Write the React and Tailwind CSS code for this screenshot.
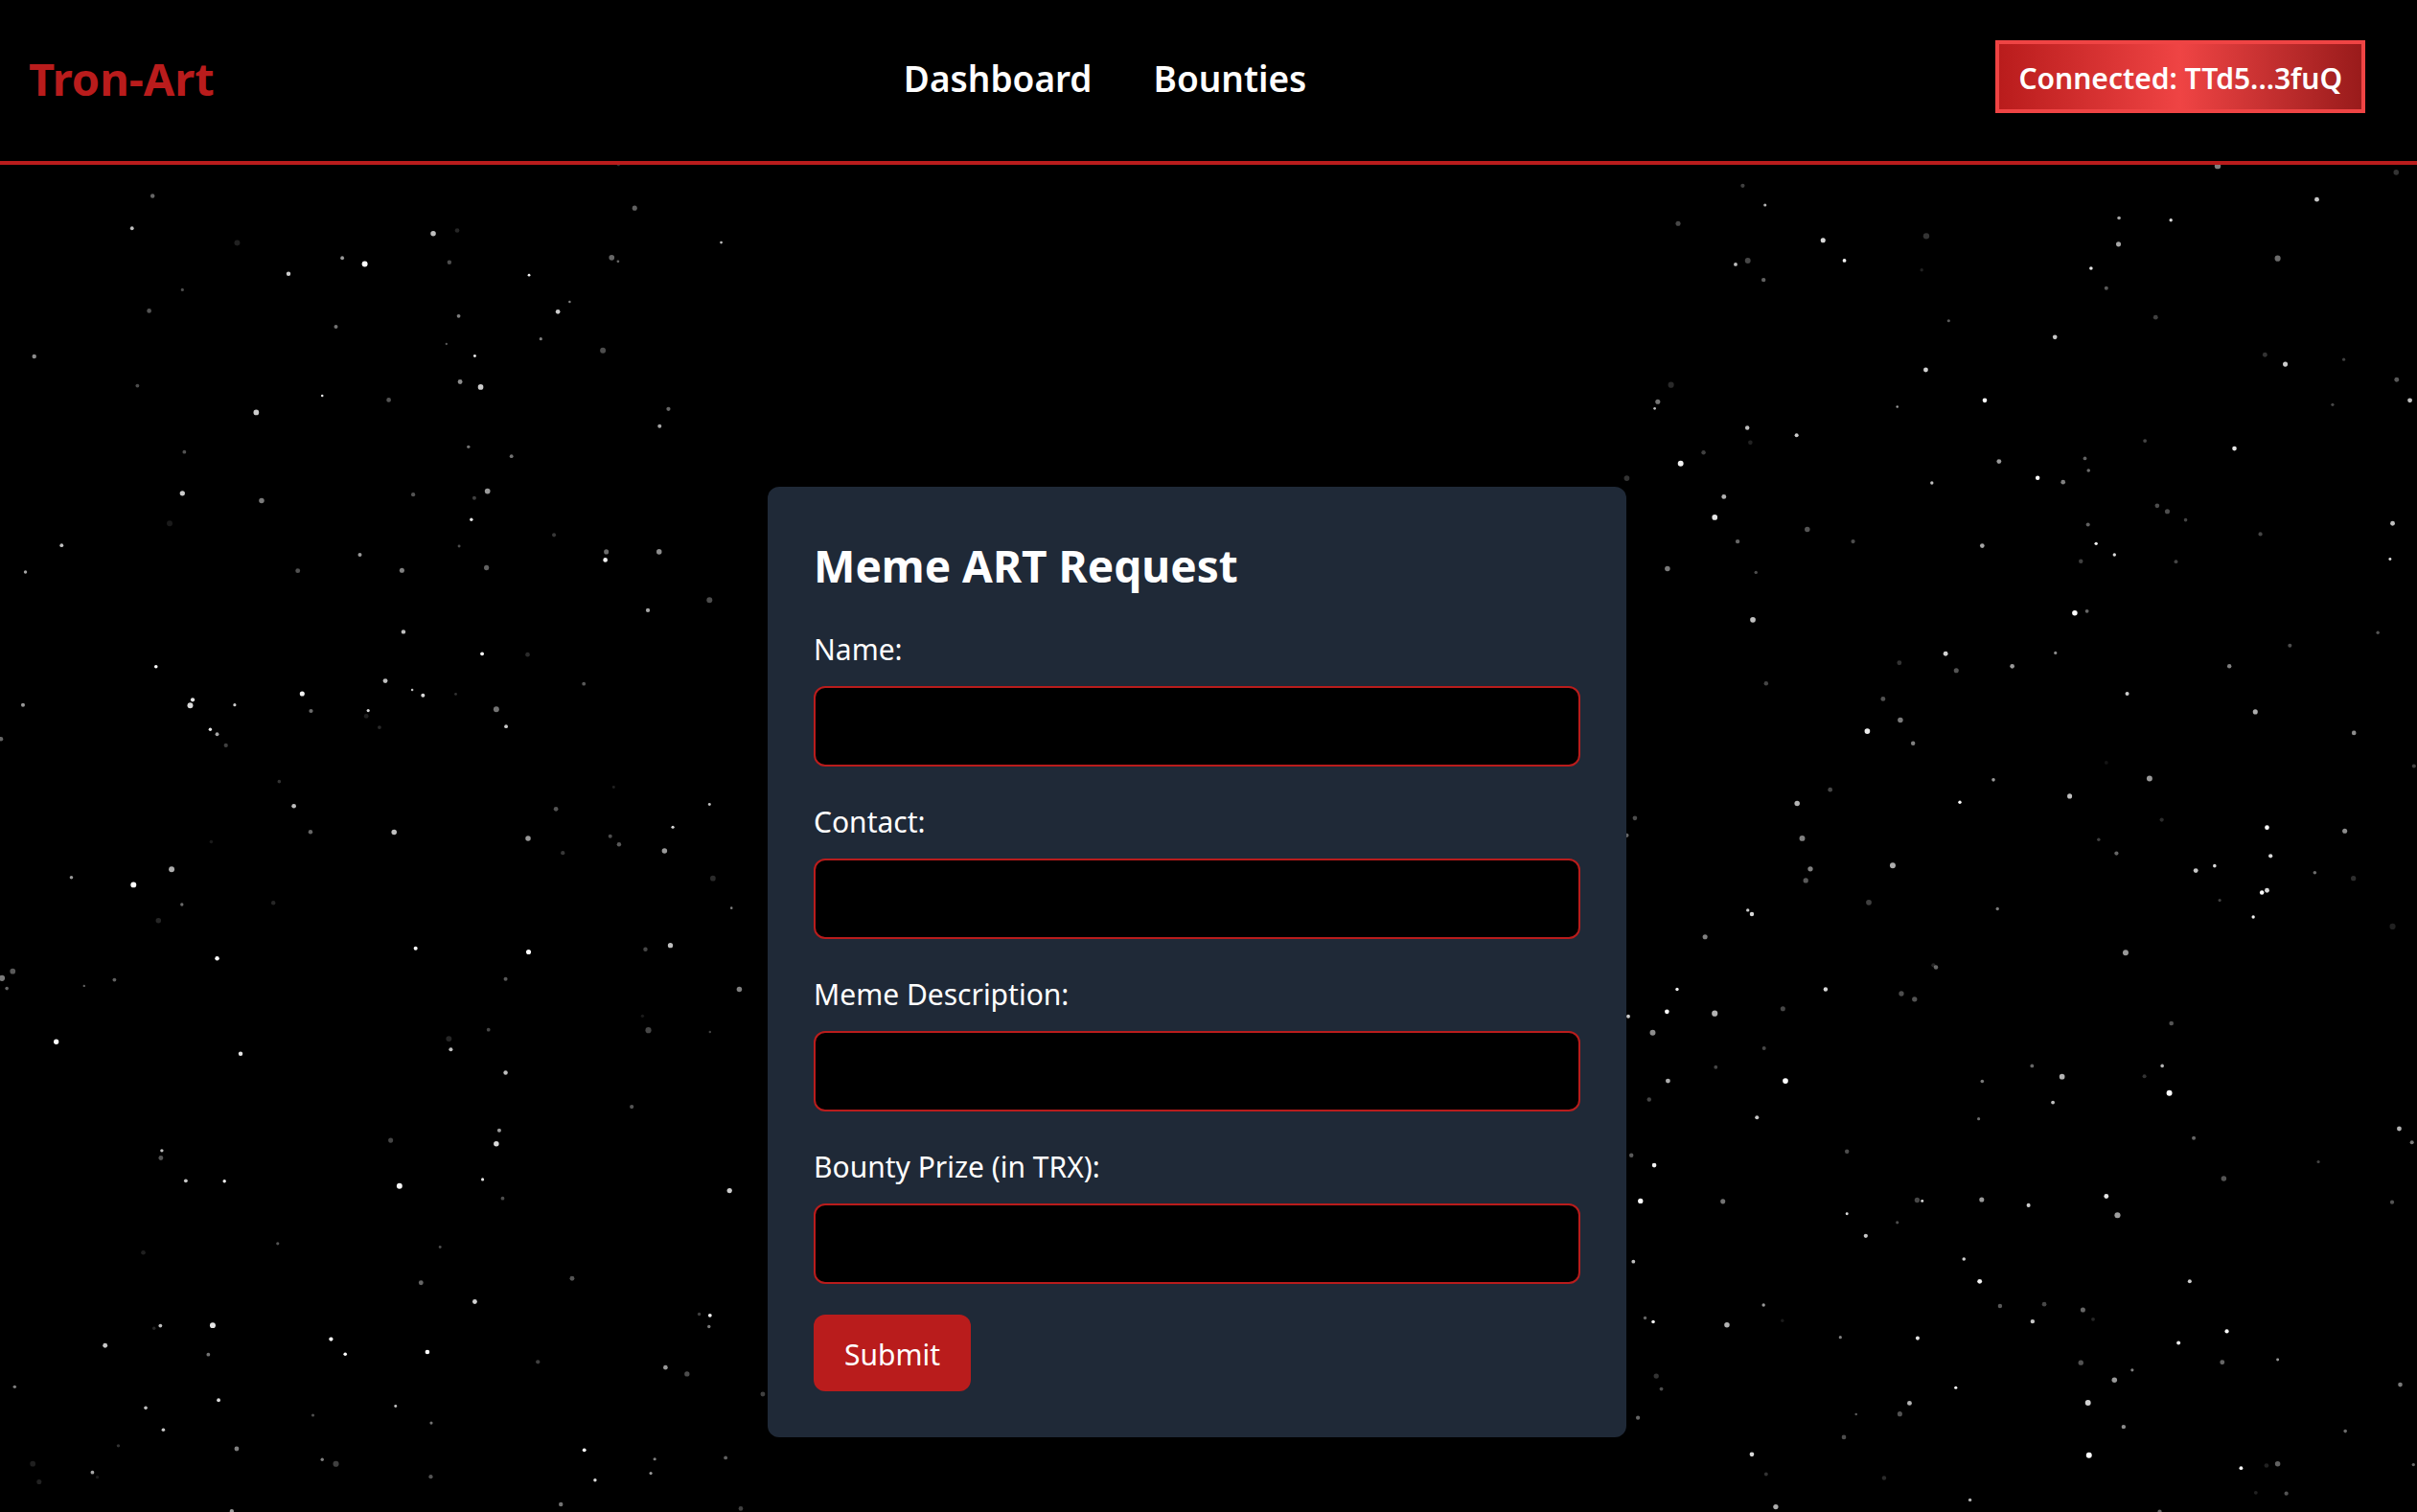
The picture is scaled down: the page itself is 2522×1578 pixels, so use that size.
// Star chart. Each sector covers a rectangle of the sky and lists its stars as
// [x, y, radius, brightness] on a 1568 × 1568 grid.
const GRID = 1568;

// Enlarges every star slightly so that the small ones stay visible.
const GLOW = 1.06;

const SECTORS = [
  {
    x: 0, y: 170, w: 800, h: 704,
    stars: [
      [312, 77, 2.1, 0.4], [270, 152, 1.8, 0.75], [485, 186, 2.8, 0.13], [700, 221, 1.8, 0.6],
      [590, 258, 2.1, 0.8], [746, 235, 2.8, 1], [886, 164, 2.6, 0.75], [935, 157, 2.2, 0.15],
      [919, 231, 2.1, 0.3], [1298, 105, 2.4, 0.38], [1475, 185, 1.3, 0.75], [1251, 220, 2.7, 0.4],
      [1264, 229, 1.3, 0.4], [1082, 261, 1.3, 0.95], [373, 295, 1.5, 0.3], [305, 344, 2.2, 0.33],
      [687, 381, 1.9, 0.45], [938, 356, 1.8, 0.5], [1141, 346, 2.2, 0.8], [1165, 323, 1.2, 0.5],
      [1106, 409, 1.5, 0.5], [913, 421, 1.1, 0.35], [971, 449, 1.4, 0.9], [1233, 436, 2.8, 0.3],
      [70, 450, 2.1, 0.55], [281, 518, 1.8, 0.3], [659, 541, 1.2, 0.9], [795, 551, 2.2, 0.33],
      [941, 509, 2.3, 0.55], [983, 521, 2.7, 0.8], [524, 580, 2.7, 0.8], [1367, 572, 2, 0.4],
      [1349, 612, 1.9, 0.65], [958, 660, 1.6, 0.45], [1046, 682, 1.8, 0.45], [377, 672, 1.8, 0.32],
      [373, 768, 2.5, 0.8], [535, 785, 2.6, 0.48], [845, 771, 2, 0.33], [997, 763, 2.7, 0.6],
      [970, 779, 1.9, 0.25], [347, 838, 2.8, 0.1], [964, 829, 1.6, 0.9], [1133, 865, 1.9, 0.22],
      [126, 889, 1.8, 0.75], [939, 891, 1.4, 0.3], [736, 911, 1.9, 0.6], [52, 951, 1.6, 0.65],
      [609, 948, 2.3, 0.32], [822, 947, 2.4, 0.5], [995, 941, 2.5, 0.38], [1240, 904, 2.4, 0.42],
      [1238, 923, 2.2, 0.95], [1348, 904, 2.6, 0.55], [1451, 1016, 2.8, 0.3], [1325, 1040, 2, 0.65],
      [825, 1090, 2.1, 0.75], [986, 1141, 1.8, 1], [1079, 1143, 2.2, 0.17], [319, 1171, 1.7, 1],
      [788, 1204, 2.3, 0.75], [1194, 1211, 1.8, 0.35], [843, 1225, 1.2, 0.75], [865, 1238, 1.9, 0.85],
      [932, 1235, 1.3, 0.2], [618, 1234, 2.4, 0.95], [394, 1248, 2, 0.9], [389, 1261, 2.8, 0.85],
      [480, 1260, 1.5, 0.8], [636, 1274, 2, 0.42], [753, 1273, 1.5, 0.85], [749, 1286, 2.3, 0.12],
      [776, 1312, 1.8, 0.16], [1015, 1270, 2.8, 0.45], [1035, 1310, 1.8, 0.8], [47, 1260, 1.9, 0.6],
      [430, 1317, 1.6, 0.9], [444, 1328, 1.8, 0.65], [462, 1354, 2, 0.25], [2, 1339, 2.1, 0.4],
      [571, 1438, 1.7, 0.2], [1255, 1451, 1.4, 0.13], [601, 1495, 2.2, 0.75], [1137, 1502, 2.2, 0.33],
      [1451, 1491, 1.4, 0.75], [1376, 1544, 1.5, 0.85], [635, 1555, 2.1, 0.4], [806, 1556, 2.6, 0.75],
      [1248, 1565, 1.9, 0.3], [1265, 4, 1.4, 0.2],
    ],
  },
  {
    x: 0, y: 874, w: 800, h: 704,
    stars: [
      [1080, 2, 2.6, 0.6], [1266, 16, 2.1, 0.35], [1151, 36, 2, 0.22], [1359, 31, 2.6, 0.6],
      [432, 10, 1.7, 0.1], [351, 74, 2.8, 0.68], [146, 93, 1.7, 0.6], [273, 110, 2.8, 1],
      [372, 156, 1.6, 0.42], [559, 152, 2.1, 0.15], [324, 193, 2.6, 0.15], [1458, 95, 2.7, 0.17],
      [1496, 164, 1.2, 0.5], [850, 258, 1.9, 1], [1081, 266, 2.4, 1], [1371, 251, 2.5, 0.75],
      [1320, 260, 2.1, 0.28], [444, 281, 2.1, 1], [26, 311, 2.7, 0.35], [4, 327, 2.9, 0.48],
      [14, 351, 1.7, 0.4], [234, 331, 1.8, 0.38], [172, 345, 1.1, 0.38], [1034, 329, 1.9, 0.35],
      [1512, 353, 2.6, 0.5], [1314, 415, 1.6, 0.1], [999, 447, 1.8, 0.28], [918, 468, 2.8, 0.15],
      [922, 493, 1.9, 0.75], [1326, 448, 2.9, 0.28], [1452, 452, 1.2, 0.25], [115, 475, 2.5, 1],
      [492, 503, 2.1, 0.9], [1034, 547, 2.1, 0.75], [1292, 626, 2, 0.33], [1021, 681, 1.9, 0.6],
      [1015, 712, 2.6, 0.85], [799, 704, 2.4, 0.27], [331, 728, 1.6, 0.75], [329, 745, 2.3, 0.33],
      [380, 798, 1.8, 0.78], [459, 799, 1.6, 0.95], [817, 810, 2.8, 0.97], [987, 795, 1.5, 0.9],
      [1028, 839, 1.8, 0.3], [1492, 821, 2.5, 0.8], [568, 944, 1.5, 0.33], [900, 952, 1.4, 0.3],
      [293, 965, 2.2, 0.12], [861, 1035, 2.3, 0.4], [1170, 1025, 2.3, 0.33], [971, 1079, 2.3, 0.82],
      [1430, 1108, 1.6, 0.25], [1452, 1111, 1.8, 0.95], [1450, 1137, 1.6, 0.48], [328, 1135, 1.8, 0.75],
      [315, 1141, 1.6, 0.15], [435, 1134, 2.8, 0.9], [215, 1181, 2.3, 0.78], [677, 1166, 2, 1],
      [706, 1201, 1.7, 1], [874, 1196, 2.2, 1], [426, 1202, 1.8, 0.45], [1100, 1219, 2, 0.25],
      [1361, 1232, 2.2, 0.6], [1405, 1247, 2.5, 0.3], [30, 1277, 1.6, 0.5], [1560, 1294, 2.3, 0.25],
      [298, 1326, 1.7, 0.75], [447, 1308, 1.8, 0.85], [809, 1322, 1.4, 0.75], [640, 1343, 1.5, 0.3],
      [882, 1361, 1.5, 0.45], [334, 1377, 1.7, 0.78], [242, 1414, 1.6, 0.2], [484, 1421, 2.3, 0.5],
      [1195, 1424, 1.8, 1], [1339, 1445, 1.5, 0.5], [1484, 1442, 1.8, 0.38], [659, 1446, 1.6, 0.5],
      [687, 1456, 2.9, 0.25], [67, 1456, 2.7, 0.12], [80, 1498, 2.4, 0.13], [189, 1476, 1.8, 0.65],
      [199, 1487, 1.6, 0.1], [881, 1486, 2, 0.33], [1331, 1478, 1.5, 0.6], [1217, 1494, 1.6, 0.85],
      [1147, 1550, 2.1, 0.45], [1515, 1560, 2.2, 0.25], [474, 1566, 2, 0.6],
    ],
  },
  {
    x: 1690, y: 170, w: 832, h: 704,
    stars: [
      [1176, 7, 3, 0.5], [1527, 22, 2.6, 0.2], [242, 53, 2, 0.25], [286, 98, 1.5, 0.7],
      [115, 141, 2.4, 0.28], [400, 180, 2.4, 0.85], [603, 170, 3, 0.2], [594, 249, 1.6, 0.13],
      [252, 227, 2.8, 0.28], [228, 236, 1.8, 0.75], [442, 227, 1.8, 0.95], [283, 272, 2.1, 0.38],
      [982, 128, 1.7, 0.65], [1084, 133, 1.6, 0.85], [981, 189, 2.4, 0.65], [1371, 85, 2.3, 0.78],
      [927, 245, 1.7, 0.9], [1294, 222, 2.9, 0.42], [957, 291, 1.9, 0.35], [1054, 359, 2.3, 0.25],
      [647, 367, 1.5, 0.35], [856, 405, 2.2, 0.78], [1269, 446, 2.3, 0.2], [1309, 468, 2.4, 0.8],
      [1424, 457, 1.5, 0.25], [602, 481, 2.3, 0.82], [1528, 504, 2.3, 0.35], [101, 516, 2.9, 0.16],
      [75, 555, 2.4, 0.45], [69, 571, 1.3, 0.75], [718, 552, 2.2, 1], [1554, 552, 2.3, 0.75],
      [546, 567, 1.2, 0.6], [1402, 562, 1.5, 0.28], [251, 616, 2.1, 0.75], [257, 650, 2.2, 0.13],
      [348, 633, 1.9, 0.8], [1033, 646, 1.8, 0.27], [1209, 664, 2.2, 0.9], [165, 673, 2.1, 0.25],
      [120, 699, 2.8, 0.95], [746, 694, 2.3, 0.6], [915, 687, 1.8, 0.38], [922, 715, 1.7, 0.42],
      [822, 732, 2.1, 1], [872, 742, 2.2, 0.5], [614, 744, 1.6, 0.75], [14, 733, 2.7, 0.2],
      [205, 776, 2.3, 0.7], [187, 824, 2.7, 0.9], [369, 852, 2.6, 0.33], [232, 880, 2.1, 0.4],
      [459, 880, 2, 0.3], [713, 890, 2.2, 0.65], [921, 841, 1.9, 0.38], [937, 885, 1.6, 0.95],
      [973, 911, 1.6, 0.85], [907, 926, 2.1, 0.25], [1057, 797, 2.2, 0.3], [1077, 810, 2.4, 0.3],
      [1113, 830, 1.7, 0.27], [1094, 927, 1.8, 0.27], [1260, 863, 2, 0.27], [1520, 838, 2.3, 0.75],
      [1515, 921, 1.4, 0.85], [94, 943, 2.6, 0.48], [268, 952, 1.6, 0.3], [262, 1062, 2.7, 0.75],
      [895, 1046, 2.6, 1], [919, 1042, 1.8, 0.4], [1491, 1092, 1.6, 0.33], [1318, 1122, 1.9, 0.3],
      [641, 1141, 2.3, 0.82], [550, 1162, 2.3, 0.2], [857, 1139, 1.5, 0.55], [662, 1180, 2.4, 0.33],
      [772, 1170, 2.2, 0.6], [1199, 1170, 2.1, 0.5], [288, 1210, 2.1, 0.27], [518, 1246, 2.3, 0.32],
      [998, 1234, 1.9, 0.8], [552, 1295, 2.6, 0.48], [1250, 1276, 2.4, 0.68], [487, 1321, 2.7, 0.92],
      [577, 1349, 2.1, 0.5], [1444, 1325, 2.2, 0.55], [957, 1394, 1.8, 0.08], [1042, 1431, 2.8, 0.6],
      [735, 1434, 1.7, 0.6], [414, 1457, 2.2, 0.28], [885, 1472, 2.4, 0.75], [349, 1489, 2.6, 0.7],
      [669, 1486, 1.6, 0.98], [1562, 1402, 1.9, 0.25], [30, 1523, 2.2, 0.3], [1066, 1527, 2, 0.17],
      [1273, 1545, 2.2, 1], [1426, 1553, 2.4, 0.55], [14, 1563, 2, 0.4],
    ],
  },
  {
    x: 1690, y: 874, w: 832, h: 704,
    stars: [
      [359, 2, 2.8, 0.5], [942, 5, 1.6, 0.25], [977, 37, 2, 0.4], [1280, 43, 2, 0.85],
      [537, 65, 2.8, 0.68], [375, 73, 2.5, 0.5], [366, 100, 2.5, 0.35], [1133, 77, 2.3, 0.78],
      [1170, 66, 1.7, 0.85], [1367, 82, 1.7, 0.42], [1443, 95, 2.5, 0.18], [490, 151, 2.7, 0.25],
      [1273, 123, 2.3, 0.85], [1263, 128, 2.1, 1], [1180, 146, 1.5, 0.25], [252, 169, 1.6, 0.8],
      [260, 178, 2.1, 0.85], [743, 166, 1.6, 0.48], [1246, 185, 1.6, 0.95], [1520, 207, 2.9, 0.13],
      [168, 231, 2.4, 0.5], [995, 268, 2.8, 0.6], [617, 297, 2, 0.15], [622, 302, 2.1, 0.4],
      [113, 353, 1.6, 0.95], [405, 353, 2.1, 0.85], [554, 363, 2.5, 0.3], [580, 376, 2.5, 0.33],
      [321, 398, 2.4, 0.28], [93, 405, 2.2, 1], [17, 416, 1.8, 0.8], [187, 409, 2.9, 0.7],
      [65, 454, 2.8, 0.55], [1085, 432, 2.2, 0.33], [284, 490, 1.9, 0.28], [189, 534, 1.8, 0.27],
      [811, 531, 1.8, 0.4], [1067, 531, 1.7, 0.7], [1032, 555, 1.9, 0.2], [870, 556, 2.7, 0.7],
      [713, 567, 1.7, 0.48], [95, 566, 2.3, 0.68], [326, 566, 2.7, 1], [58, 609, 2.1, 0.27],
      [1081, 594, 2.8, 1], [852, 616, 1.8, 0.75], [270, 651, 1.9, 0.78], [706, 654, 1.5, 0.42],
      [1129, 699, 1.9, 0.4], [1533, 677, 2.3, 0.7], [1558, 709, 1.9, 0.48], [447, 730, 2.1, 0.3],
      [23, 739, 2.1, 0.35], [68, 762, 2.2, 0.95], [1374, 754, 1.5, 0.27], [1188, 793, 2.6, 0.33],
      [41, 845, 2.5, 1], [203, 846, 2.4, 0.45], [585, 843, 2.5, 0.28], [595, 845, 1.4, 0.85],
      [712, 842, 2.4, 0.6], [804, 855, 1.9, 0.8], [957, 834, 2.3, 0.9], [979, 878, 2.9, 0.62],
      [1519, 848, 2, 0.33], [447, 875, 1.4, 0.85], [546, 895, 1.5, 0.3], [484, 926, 2, 0.78],
      [677, 980, 1.7, 0.8], [27, 986, 1.8, 0.75], [708, 1032, 2.3, 0.95], [1121, 1032, 1.9, 0.8],
      [283, 1087, 1.6, 0.6], [748, 1089, 2.1, 0.35], [835, 1085, 2.2, 0.28], [911, 1098, 2.4, 0.4],
      [931, 1120, 1.8, 0.15], [812, 1125, 2.1, 0.78], [50, 1117, 1.6, 0.4], [66, 1126, 1.7, 0.95],
      [320, 1123, 1.6, 0.1], [211, 1133, 2.6, 0.7], [434, 1162, 1.5, 0.5], [586, 1164, 1.9, 0.9],
      [1194, 1148, 2, 1], [1099, 1175, 1.9, 0.92], [907, 1221, 2.5, 0.32], [1185, 1220, 2.3, 0.4],
      [1294, 1214, 1.4, 0.6], [1008, 1238, 1.5, 0.5], [973, 1261, 2.6, 0.6], [72, 1252, 2.5, 0.2],
      [82, 1282, 1.8, 0.3], [661, 1279, 1.5, 1], [1535, 1272, 2.2, 0.48], [570, 1315, 2.3, 0.7],
      [921, 1314, 2.8, 0.82], [551, 1340, 2.4, 0.32], [465, 1341, 1.2, 0.35], [36, 1349, 2, 0.4],
      [991, 1370, 2.1, 0.55], [1427, 1380, 1.7, 0.42], [441, 1394, 2.2, 0.3], [260, 1434, 2.2, 0.85],
      [923, 1436, 2.8, 1], [1294, 1456, 2.6, 0.38], [1272, 1460, 2.2, 0.13], [1222, 1466, 1.8, 0.98],
      [288, 1480, 1.8, 0.2], [520, 1489, 2.1, 0.17], [1251, 1523, 1.8, 0.13], [1311, 1525, 2, 0.33],
      [689, 1540, 1.6, 0.7], [307, 1556, 2.5, 0.68], [1062, 1567, 2, 0.4], [1561, 1458, 1.6, 0.4],
    ],
  },
];

const FIELDS = [
  { id: "name", label: "Name:", type: "text" },
  { id: "contact", label: "Contact:", type: "text" },
  { id: "description", label: "Meme Description:", type: "text" },
  { id: "prize", label: "Bounty Prize (in TRX):", type: "number" },
];

function Starfield() {
  return (
    <svg
      className="pointer-events-none absolute inset-0 h-full w-full"
      viewBox="0 172 2522 1406"
      preserveAspectRatio="xMidYMin slice"
      aria-hidden="true"
    >
      {SECTORS.map((s, i) => (
        <g key={i} fill="#fff">
          {s.stars.map(([x, y, r, a], j) => (
            <circle
              key={j}
              cx={s.x + (x * s.w) / GRID}
              cy={s.y + (y * s.h) / GRID}
              r={r * GLOW}
              opacity={a}
            />
          ))}
        </g>
      ))}
    </svg>
  );
}

function Header() {
  return (
    <header className="flex items-center justify-between border-b-4 border-[#b91c1c] bg-black pt-[42px] pr-[54px] pb-[50px] pl-[30px]">
      <a href="#" className="pt-1 text-[47px] leading-[64px] font-bold text-[#b91c1c]">
        Tron-Art
      </a>
      <nav className="flex gap-16 pt-1 text-[37px] leading-[56px] font-semibold text-white">
        <a href="#dashboard">Dashboard</a>
        <a href="#bounties">Bounties</a>
      </nav>
      <button
        type="button"
        className="border-4 border-[#ef4444] bg-[linear-gradient(to_right,#b91c1c,#ef4444,#991b1b)] px-5 pt-3 pb-2 text-[30px] leading-[48px] font-semibold text-white"
      >
        Connected: TTd5...3fuQ
      </button>
    </header>
  );
}

function RequestForm() {
  return (
    <form
      className="relative w-full max-w-4xl rounded-xl bg-[#1f2937] p-12 text-white"
      onSubmit={(e) => e.preventDefault()}
    >
      <h2 className="mb-7 text-[46px] leading-[68px] font-bold">Meme ART Request</h2>
      {FIELDS.map((f) => (
        <div key={f.id} className="mb-8">
          <label htmlFor={f.id} className="mb-3 block text-[30px] leading-[52px]">
            {f.label}
          </label>
          <input
            id={f.id}
            name={f.id}
            type={f.type}
            className="block h-[84px] w-full rounded-xl border-2 border-[#b91c1c] bg-black px-4 text-[30px] text-white"
          />
        </div>
      ))}
      <button
        type="submit"
        className="block rounded-xl bg-[#b91c1c] px-8 pt-[18px] pb-[14px] text-[30px] leading-[48px] text-white"
      >
        Submit
      </button>
    </form>
  );
}

export default function App() {
  return (
    <div className='flex min-h-screen flex-col bg-black font-["Noto_Sans","Open_Sans",sans-serif]'>
      <Header />
      <main className="relative flex flex-1 items-start justify-center overflow-hidden pt-84 pr-6 pb-16">
        <Starfield />
        <RequestForm />
      </main>
    </div>
  );
}
